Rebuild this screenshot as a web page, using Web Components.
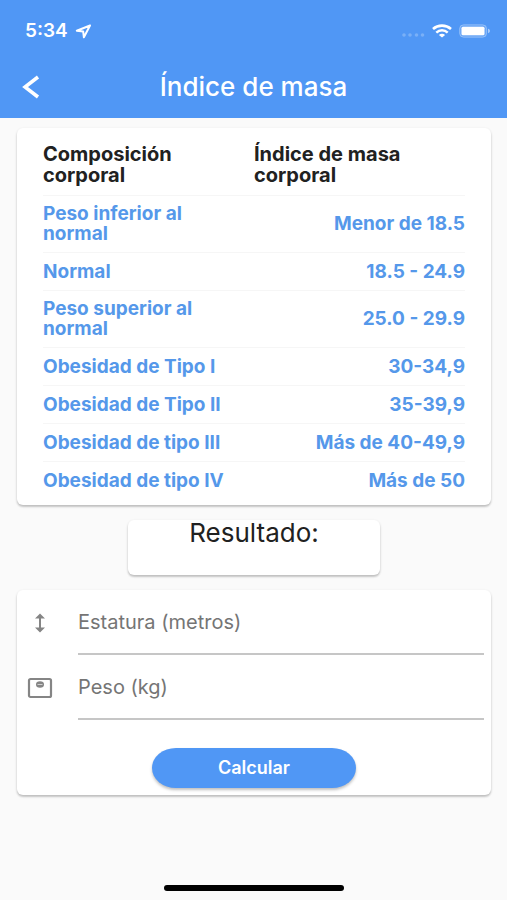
<!DOCTYPE html>
<html lang="es">
<head>
<meta charset="utf-8">
<meta name="viewport" content="width=device-width, initial-scale=1">
<title>Índice de masa</title>
<style>
  html { height: 100%; }
  body {
    margin: 0;
    min-height: 100%;
    display: flex;
    background: #fafafa;
    color: #212121;
    font-family: Inter, "Liberation Sans", sans-serif;
    --blue: #5097f5;
    --text-blue: #5598ea;
  }
</style>
</head>
<body>
<imc-app></imc-app>
<script>
const define = (name, html, setup) => {
  const template = document.createElement('template');
  template.innerHTML = html;
  customElements.define(name, class extends HTMLElement {
    constructor() {
      super();
      this.attachShadow({ mode: 'open' }).append(template.content.cloneNode(true));
    }
    connectedCallback() {
      if (setup) setup(this, this.shadowRoot);
    }
  });
};

define('status-bar', `
  <style>
    :host { display: flex; align-items: center; justify-content: space-between; height: 62px; padding: 0 16px 0 25px; }
    div { display: flex; align-items: center; }
    .time { gap: 7px; font-size: 19px; line-height: 24px; font-weight: 600; }
    .signals { gap: 7px; }
    svg { display: block; }
  </style>
  <div class="time"><span>5:34</span>
    <svg width="17" height="15" viewBox="0 0 17 15" fill="none" stroke="#fff" stroke-width="2" stroke-linejoin="round"><path d="M15 1.5 1.8 6.7l6.4.9.7 5.7z"/></svg>
  </div>
  <div class="signals">
    <svg width="24" height="14" viewBox="0 0 24 14" fill="#fff" fill-opacity=".24"><circle cx="3" cy="11" r="1.8"/><circle cx="9" cy="11" r="1.8"/><circle cx="15.500" cy="11" r="1.8"/><circle cx="21.500" cy="11" r="1.8"/></svg>
    <svg width="20" height="14" viewBox="0 0 20 14" fill="none" stroke="#fff"><path d="M1 5C6 .5 14 .5 19 5" stroke-width="2.600"/><path d="M4.300 8.600c3.300-3 8.100-3 11.400 0" stroke-width="2.500"/><path d="M10 13.500 6.900 10.900c1.800-1.600 4.400-1.600 6.200 0z" fill="#fff" stroke="none"/></svg>
    <svg width="32" height="14" viewBox="0 0 32 14"><rect x=".6" y=".8" width="27" height="12.400" rx="4" fill="#fff" fill-opacity=".15" stroke="#fff" stroke-opacity=".3"/><rect x="2.500" y="2.800" width="23" height="8.400" rx="1.500" fill="#fff"/><path d="M29 4.800c2.600.6 2.600 3.800 0 4.400z" fill="#fff" fill-opacity=".5"/></svg>
  </div>`);

define('app-header', `
  <style>
    :host { display: block; background: var(--blue); color: #fff; }
    .bar { display: grid; grid-template-columns: 62px 1fr 62px; align-items: center; height: 50px; padding-bottom: 6px; }
    h1 { margin: 0; font-size: 26px; line-height: 30px; font-weight: 500; text-align: center; }
    button { display: grid; place-items: center; width: 62px; height: 50px; padding: 0; border: 0; background: none; color: inherit; cursor: pointer; }
  </style>
  <status-bar></status-bar>
  <div class="bar">
    <button type="button" aria-label="Volver"><svg width="18" height="24" viewBox="0 0 18 24" fill="none" stroke="currentColor" stroke-width="3.500"><path d="M16 2 3 12l13 10"/></svg></button>
    <h1><slot></slot></h1>
  </div>`);

define('app-card', `
  <style>
    :host { display: block; background: #fff; border-radius: 6px; box-shadow: 0 2px 2px rgba(0,0,0,.16), 0 1px 3px rgba(0,0,0,.12); }
  </style>
  <slot></slot>`);

define('imc-table', `
  <style>
    :host { display: block; padding: 4px 26px 5px; }
    table { width: 100%; table-layout: fixed; border-collapse: separate; border-spacing: 0; }
    th, td { text-align: left; padding: 8px 0; border-bottom: 1px solid #f6f6f6; box-sizing: border-box; font-weight: 700; }
    thead th { padding: 12px 0 9px; font-size: 20px; line-height: 21px; }
    tbody th, tbody td { height: 38px; font-size: 19px; line-height: 20px; color: var(--text-blue); }
    th:first-child { padding-right: 16px; }
    thead th:last-child { padding-right: 16px; }
    td { text-align: right; }
    tbody tr:last-child > * { border-bottom: 0; }
  </style>
  <table>
    <thead><tr><th scope="col">Composición corporal</th><th scope="col">Índice de masa corporal</th></tr></thead>
    <tbody></tbody>
  </table>`, (host, root) => {
  const rows = [
    ['Peso inferior al normal', 'Menor de 18.5'],
    ['Normal', '18.5 - 24.9'],
    ['Peso superior al normal', '25.0 - 29.9'],
    ['Obesidad de Tipo I', '30-34,9'],
    ['Obesidad de Tipo II', '35-39,9'],
    ['Obesidad de tipo III', 'Más de 40-49,9'],
    ['Obesidad de tipo IV', 'Más de 50']
  ];
  root.querySelector('tbody').innerHTML = rows.map(([name, range]) =>
    `<tr><th scope="row">${name}</th><td>${range}</td></tr>`).join('');
});

define('form-field', `
  <style>
    :host { display: grid; grid-template-columns: 46px 1fr; column-gap: 15px; height: 65px; padding-right: 7px; color: #757575; }
    ::slotted(svg) { display: block; place-self: center; }
    .box { display: grid; border-bottom: 2px solid #c6c6c6; }
    label, input { grid-area: 1 / 1; font-size: 20px; line-height: 24px; }
    label { align-self: center; pointer-events: none; }
    input { width: 100%; min-width: 0; box-sizing: border-box; padding: 0; border: 0; outline: 0; background: none; font-family: inherit; color: #212121; }
    input:not(:placeholder-shown) + label { align-self: start; font-size: 13px; line-height: 16px; }
    .box:focus-within { border-color: var(--blue); }
  </style>
  <slot></slot>
  <div class="box"><input id="value" inputmode="decimal" placeholder=" "><label for="value"></label></div>`, (host, root) => {
  root.querySelector('label').textContent = host.getAttribute('label');
});

define('pill-button', `
  <style>
    :host { display: block; }
    button { display: block; width: 100%; height: 40px; padding: 0; border: 0; border-radius: 24px / 20px; background: var(--blue); color: #fff; font: 600 18px/20px Inter, "Liberation Sans", sans-serif; box-shadow: 0 2px 3px rgba(0,0,0,.25); cursor: pointer; }
  </style>
  <button type="button"><slot></slot></button>`);

define('imc-app', `
  <style>
    :host { display: flex; flex-direction: column; flex: 1; min-width: 0; }
    main { flex: 1; display: flex; flex-direction: column; gap: 15px; padding: 10px 16px 24px 17px; }
    .result { align-self: center; width: 53%; min-height: 55px; text-align: center; }
    h2 { margin: 0; font-size: 26px; line-height: 26px; font-weight: 400; }
    .form { padding-bottom: 7px; }
    pill-button { width: 43%; margin: 28px auto 0; }
    .home { width: 180px; height: 6px; margin: 0 auto 9px; border-radius: 3px; background: #000; }
  </style>
  <app-header>Índice de masa</app-header>
  <main>
    <app-card><imc-table></imc-table></app-card>
    <app-card class="result"><h2>Resultado:</h2></app-card>
    <app-card class="form">
      <form-field label="Estatura (metros)">
        <svg width="12" height="20" viewBox="0 0 12 20" fill="none" stroke="#858585" stroke-width="2"><path d="M6 3v14"/><path d="M1 5.500h10L6 .5zM1 14.500h10l-5 5z" fill="#858585" stroke="none"/></svg>
      </form-field>
      <form-field label="Peso (kg)">
        <svg width="26" height="22" viewBox="0 0 26 22" fill="none" stroke="#858585"><rect x="2" y="2" width="22" height="18" rx="1.500" stroke-width="2.200"/><ellipse cx="13" cy="7.500" rx="4" ry="3.200" fill="#858585" stroke="none"/><path d="M10.500 7.500h5" stroke="#d0d0d0"/></svg>
      </form-field>
      <pill-button>Calcular</pill-button>
    </app-card>
  </main>
  <div class="home"></div>`);
</script>
</body>
</html>
